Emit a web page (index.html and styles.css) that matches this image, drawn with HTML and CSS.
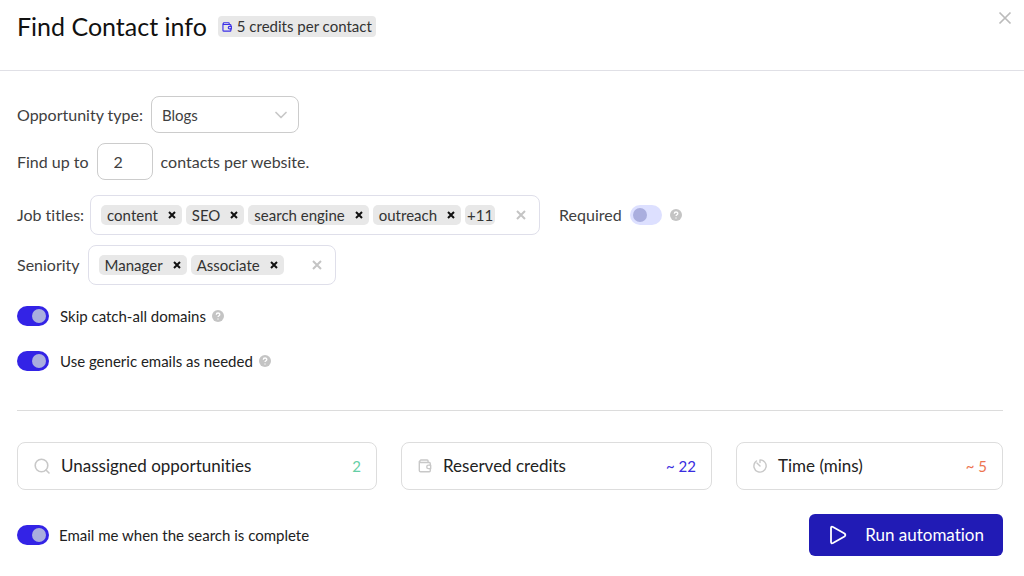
FILE: index.html
```html
<!DOCTYPE html>
<html lang="en">
<head>
<meta charset="utf-8">
<meta name="viewport" content="width=device-width, initial-scale=1">
<title>Find Contact info</title>
<link rel="stylesheet" href="styles.css">
</head>
<body>
<form class="dialog">
  <header class="header">
    <h1 class="title">Find Contact info</h1>
    <span class="credits">
      <svg class="credits-icon" viewBox="0 0 16 16" fill="none" stroke="currentColor" stroke-width="1.8" stroke-linecap="round" stroke-linejoin="round"><path d="M11.5 4V2.2a1 1 0 0 0-1-1H3A1.5 1.5 0 0 0 3 4h10.2a1 1 0 0 1 1 1v2M1.5 2.7V13a1.5 1.5 0 0 0 1.5 1.5h10.2a1 1 0 0 0 1-1V11"/><path d="M15 7h-3a2 2 0 0 0 0 4h3z"/></svg>
      5 credits per contact
    </span>
    <button class="close" type="button" aria-label="Close">
      <svg viewBox="0 0 14 14" fill="none" stroke="currentColor" stroke-width="1.7"><path d="M1.5 1.5l11 11M12.5 1.5l-11 11"/></svg>
    </button>
  </header>

  <main class="content">
    <div class="fields">
      <div class="row">
        <label for="type">Opportunity type:</label>
        <span class="select-wrap">
          <select class="select" id="type"><option>Blogs</option></select>
          <svg class="chevron" viewBox="0 0 12 8" fill="none" stroke="currentColor" stroke-width="1.7" stroke-linecap="round" stroke-linejoin="round"><path d="M1 1.5l5 5 5-5"/></svg>
        </span>
      </div>
      <div class="row">
        <label for="count">Find up to</label>
        <input class="count" id="count" type="text" inputmode="numeric" value="2">
        <span>contacts per website.</span>
      </div>
      <div class="row row-tags">
        <span id="jobs">Job titles:</span>
        <div class="tags tags-wide" role="group" aria-labelledby="jobs">
          <span class="tag">content <button class="remove" type="button" aria-label="Remove content"><svg viewBox="0 0 8 8"><path d="M1 1l6 6M7 1L1 7"/></svg></button></span>
          <span class="tag">SEO <button class="remove" type="button" aria-label="Remove SEO"><svg viewBox="0 0 8 8"><path d="M1 1l6 6M7 1L1 7"/></svg></button></span>
          <span class="tag">search engine <button class="remove" type="button" aria-label="Remove search engine"><svg viewBox="0 0 8 8"><path d="M1 1l6 6M7 1L1 7"/></svg></button></span>
          <span class="tag">outreach <button class="remove" type="button" aria-label="Remove outreach"><svg viewBox="0 0 8 8"><path d="M1 1l6 6M7 1L1 7"/></svg></button></span>
          <span class="tag tag-more">+11</span>
          <button class="clear" type="button" aria-label="Clear job titles"><svg viewBox="0 0 10 10"><path d="M1 1l8 8M9 1L1 9"/></svg></button>
        </div>
        <div class="required">
          <label for="required">Required</label>
          <input class="switch" id="required" type="checkbox" role="switch">
          <svg class="help" viewBox="0 0 12 12"><circle cx="6" cy="6" r="6" fill="#c4c4c4"/><path d="M4.3 4.7c0-2.3 3.5-2.2 3.5-.2C7.8 5.700 6 5.700 6 7.100M6 8.600v1" fill="none" stroke="#fff" stroke-width="1.3"/></svg>
        </div>
      </div>
      <div class="row">
        <span id="seniority">Seniority</span>
        <div class="tags tags-narrow" role="group" aria-labelledby="seniority">
          <span class="tag">Manager <button class="remove" type="button" aria-label="Remove Manager"><svg viewBox="0 0 8 8"><path d="M1 1l6 6M7 1L1 7"/></svg></button></span>
          <span class="tag">Associate <button class="remove" type="button" aria-label="Remove Associate"><svg viewBox="0 0 8 8"><path d="M1 1l6 6M7 1L1 7"/></svg></button></span>
          <button class="clear" type="button" aria-label="Clear seniority"><svg viewBox="0 0 10 10"><path d="M1 1l8 8M9 1L1 9"/></svg></button>
        </div>
      </div>
    </div>

    <div class="options">
      <div class="option">
        <input class="switch" id="skip" type="checkbox" role="switch" checked>
        <label for="skip">Skip catch-all domains</label>
        <svg class="help" viewBox="0 0 12 12"><circle cx="6" cy="6" r="6" fill="#c4c4c4"/><path d="M4.3 4.7c0-2.3 3.5-2.2 3.5-.2C7.8 5.700 6 5.700 6 7.100M6 8.600v1" fill="none" stroke="#fff" stroke-width="1.3"/></svg>
      </div>
      <div class="option">
        <input class="switch" id="generic" type="checkbox" role="switch" checked>
        <label for="generic">Use generic emails as needed</label>
        <svg class="help" viewBox="0 0 12 12"><circle cx="6" cy="6" r="6" fill="#c4c4c4"/><path d="M4.3 4.7c0-2.3 3.5-2.2 3.5-.2C7.8 5.700 6 5.700 6 7.100M6 8.600v1" fill="none" stroke="#fff" stroke-width="1.3"/></svg>
      </div>
    </div>

    <div class="stats">
      <div class="stat">
        <svg class="stat-icon stat-icon-search" viewBox="0 0 16 16"><circle cx="7.5" cy="7.5" r="6.300"/><path d="M12 12l3 3"/></svg>
        <span>Unassigned opportunities</span>
        <span class="value value-green">2</span>
      </div>
      <div class="stat">
        <svg class="stat-icon" viewBox="0 0 16 16"><path d="M11.500 4V2.200a1 1 0 0 0-1-1H3A1.500 1.500 0 0 0 3 4h10a1 1 0 0 1 1 1v2M1.500 2.700V13a1.500 1.500 0 0 0 1.500 1.500h10a1 1 0 0 0 1-1V11"/><path d="M14.500 7H12a2 2 0 0 0 0 4h2.500z"/></svg>
        <span>Reserved credits</span>
        <span class="value value-blue">~ 22</span>
      </div>
      <div class="stat">
        <svg class="stat-icon" viewBox="0 0 16 16"><path d="M8 4V1a7 7 0 1 1-5.700 3M8 8L4.500 4.500M2.300 4a7 7 0 0 1 1.700-1.700"/></svg>
        <span>Time (mins)</span>
        <span class="value value-orange">~ 5</span>
      </div>
    </div>

    <footer class="footer">
      <div class="option">
        <input class="switch" id="notify" type="checkbox" role="switch" checked>
        <label for="notify">Email me when the search is complete</label>
      </div>
      <button class="run" type="submit">
        <svg class="run-icon" viewBox="0 0 18 20" fill="none" stroke="currentColor" stroke-width="1.8" stroke-linejoin="round"><path d="M2 3.200v13.600q0 2.200 2 1.200l11.500-6.500q1.700-1.500 0-3L4 2Q2 1 2 3.200z"/></svg>
        Run automation
      </button>
    </footer>
  </main>
</form>
</body>
</html>
```
FILE: styles.css
```css
*, *::before { box-sizing: border-box; }

body {
  margin: 0;
  background: #fff;
  color: #404040;
  font: 17px/20px Lato, "Open Sans", sans-serif;
  font-variant-ligatures: none;
}

button, input, select { font: inherit; color: inherit; margin: 0; }
button { padding: 0; border: 0; background: none; cursor: pointer; }
svg { display: block; flex: none; }

.header {
  display: flex;
  align-items: flex-start;
  padding: 11px 12px 28px 17px;
  border-bottom: 1px solid #e0e0e6;
}
.title {
  margin: 0;
  color: #111;
  font-size: 25px;
  font-weight: 400;
  line-height: 31px;
}
.credits {
  display: flex;
  align-items: center;
  gap: 5px;
  margin: 5px 0 0 11px;
  padding: 0 4px;
  border-radius: 4px;
  background: #e8e8e8;
  color: #333;
  font-size: 15px;
  line-height: 21px;
}
.credits-icon { width: 10px; height: 10px; color: #3b2fe8; }
.close { margin-left: auto; color: #bbb; }
.close svg { width: 14px; height: 14px; }

.content { padding: 25px 21px 20px 17px; }

.fields { display: flex; flex-direction: column; gap: 10px; font-size: 16px; }
.row { display: flex; align-items: center; gap: 8px; }
.row-tags { margin-top: 5px; gap: 6px; }

.select-wrap { position: relative; width: 148px; }
.select, .count {
  display: block;
  width: 100%;
  height: 37px;
  border: 1px solid #ccc;
  border-radius: 8px;
  background: #fff;
}
.select { appearance: none; padding: 0 10px; font-size: 15px; }
.chevron {
  position: absolute;
  top: 15px;
  right: 12px;
  width: 12px;
  height: 8px;
  color: #c8c8c8;
  pointer-events: none;
}
.count { width: 56px; padding: 0 16px; }

.tags {
  display: flex;
  align-items: center;
  gap: 4px;
  height: 40px;
  padding: 0 13px 0 10px;
  border: 1px solid #dfdfea;
  border-radius: 8px;
}
.tags-wide { width: 450px; }
.tags-narrow { width: 248px; }
.tag {
  display: flex;
  align-items: center;
  gap: 10px;
  padding: 0 6px;
  border-radius: 5px;
  background: #e8e8e8;
  color: #333;
  font-size: 15px;
}
.tag-more { padding: 0 2px; }
.remove { color: #111; }
.remove svg { width: 8px; height: 8px; stroke: currentColor; stroke-width: 2; }
.clear { margin-left: auto; color: #c4c4c4; }
.clear svg { width: 10px; height: 10px; stroke: currentColor; stroke-width: 2; }

.required { display: flex; align-items: center; gap: 8px; margin-left: 13px; }
.help { width: 12px; height: 12px; }

.switch {
  appearance: none;
  flex: none;
  width: 32px;
  height: 20px;
  padding: 3px;
  border-radius: 10px;
  background: #dde0ff;
  cursor: pointer;
}
.switch::before {
  content: "";
  display: block;
  width: 14px;
  height: 14px;
  border-radius: 50%;
  background: #aaaede;
}
.switch:checked { background: #3323e6; }
.switch:checked::before { margin-left: auto; }

.options {
  display: flex;
  flex-direction: column;
  gap: 25px;
  padding: 21px 0 39px;
  border-bottom: 1px solid #dcdcdc;
}
.option { display: flex; align-items: center; color: #222; font-size: 15px; }
.option label { padding: 0 6px 0 11px; }

.stats {
  display: grid;
  grid-template-columns: 360fr 311fr 267fr;
  gap: 24px;
  padding: 31px 0 24px;
}
.stat {
  display: flex;
  align-items: center;
  gap: 11px;
  height: 48px;
  padding: 0 15px 0 16px;
  border: 1px solid #ddd;
  border-radius: 8px;
  color: #222;
}
.stat-icon {
  width: 14px;
  height: 14px;
  fill: none;
  stroke: #c8c8c8;
  stroke-width: 1.6;
  stroke-linecap: round;
  stroke-linejoin: round;
}
.stat-icon-search { width: 16px; height: 16px; }
.value { margin-left: auto; font-size: 15px; }
.value-green { color: #66cfa6; }
.value-blue { color: #392de0; }
.value-orange { color: #ed7450; }

.footer { display: flex; align-items: center; justify-content: space-between; }
.footer .option label { padding-left: 10px; }
.run {
  display: flex;
  align-items: center;
  gap: 18px;
  height: 42px;
  padding: 0 19px 0 20px;
  border-radius: 6px;
  background: #211bb5;
  color: #fff;
}
.run-icon { width: 18px; height: 20px; }
```
